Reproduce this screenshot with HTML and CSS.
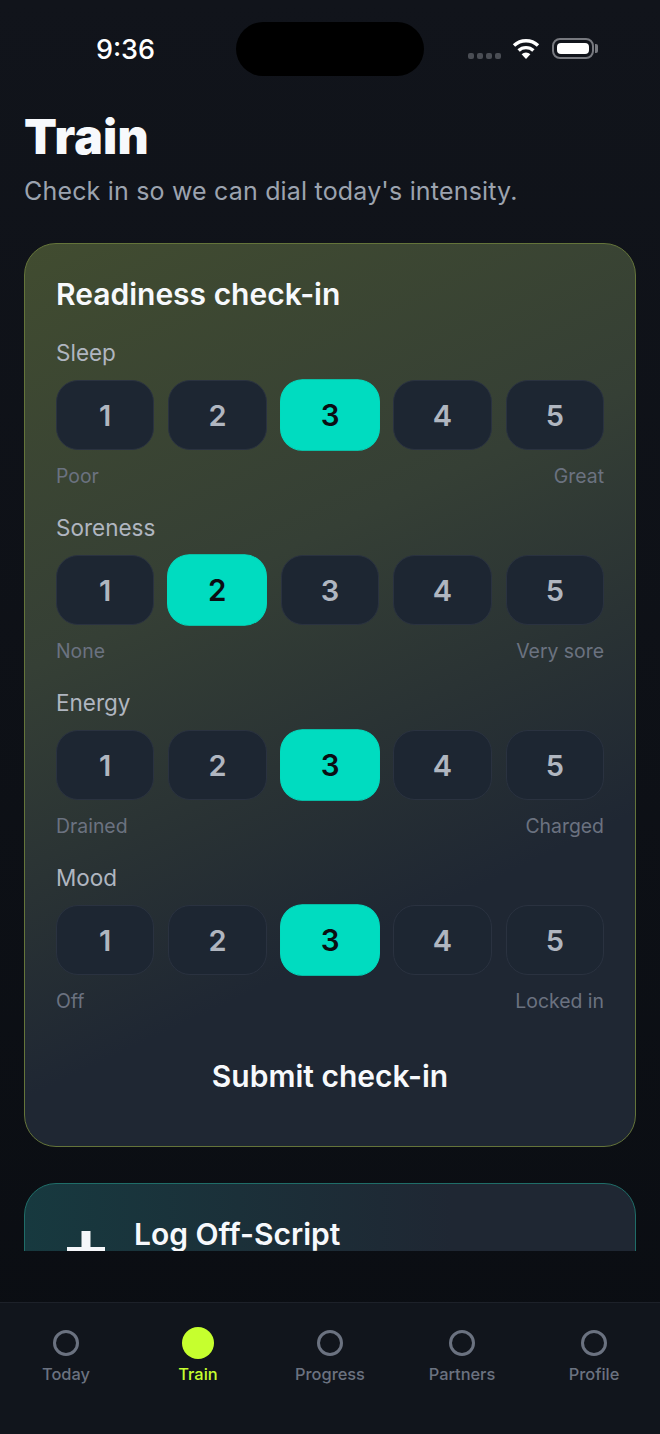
FILE: index.html
```html
<!DOCTYPE html>
<html lang="en">
<head>
    <meta charset="UTF-8">
    <meta name="viewport" content="width=device-width, initial-scale=1.0">
    <title>Train</title>
    <link rel="stylesheet" href="styles.css">
</head>
<body>
    <div class="app">
        <div class="status-bar">
            <span class="time">9:36</span>
            <div class="island"></div>
            <div class="status-icons">
                <div class="signal"><i></i><i></i><i></i><i></i></div>
                <svg class="wifi" width="28" height="22" viewBox="0 0 28 22">
                    <path d="M14 21 L9.6 16.2 A6.4 6.4 0 0 1 18.4 16.2 Z" fill="#fff"/>
                    <path d="M6.6 12.6 A10.8 10.8 0 0 1 21.4 12.6" fill="none" stroke="#fff" stroke-width="3.4"/>
                    <path d="M2 7.6 A17.4 17.4 0 0 1 26 7.6" fill="none" stroke="#fff" stroke-width="3.4"/>
                </svg>
                <div class="battery"><div class="battery-fill"></div></div>
            </div>
        </div>

        <main class="content">
            <h1>Train</h1>
            <p class="subtitle">Check in so we can dial today's intensity.</p>

            <section class="card checkin">
                <h2>Readiness check-in</h2>

                <div class="metric">
                    <div class="metric-label">Sleep</div>
                    <div class="scale">
                        <button>1</button><button>2</button><button class="selected">3</button><button>4</button><button>5</button>
                    </div>
                    <div class="scale-ends"><span>Poor</span><span>Great</span></div>
                </div>

                <div class="metric">
                    <div class="metric-label">Soreness</div>
                    <div class="scale">
                        <button>1</button><button class="selected">2</button><button>3</button><button>4</button><button>5</button>
                    </div>
                    <div class="scale-ends"><span>None</span><span>Very sore</span></div>
                </div>

                <div class="metric">
                    <div class="metric-label">Energy</div>
                    <div class="scale">
                        <button>1</button><button>2</button><button class="selected">3</button><button>4</button><button>5</button>
                    </div>
                    <div class="scale-ends"><span>Drained</span><span>Charged</span></div>
                </div>

                <div class="metric">
                    <div class="metric-label">Mood</div>
                    <div class="scale">
                        <button>1</button><button>2</button><button class="selected">3</button><button>4</button><button>5</button>
                    </div>
                    <div class="scale-ends"><span>Off</span><span>Locked in</span></div>
                </div>

                <button class="submit">Submit check-in</button>
            </section>

            <section class="card log">
                <svg class="plus" width="38" height="38" viewBox="0 0 38 38">
                    <rect x="14.5" y="0" width="9" height="38" fill="#f5f7fa"/>
                    <rect x="0" y="16" width="38" height="8" fill="#f5f7fa"/>
                </svg>
                <h2>Log Off-Script</h2>
            </section>
        </main>

        <nav class="tabs">
            <div class="tab"><span class="dot"></span>Today</div>
            <div class="tab active"><span class="dot"></span>Train</div>
            <div class="tab"><span class="dot"></span>Progress</div>
            <div class="tab"><span class="dot"></span>Partners</div>
            <div class="tab"><span class="dot"></span>Profile</div>
        </nav>
    </div>
</body>
</html>
```

FILE: styles.css
```css
* {
    box-sizing: border-box;
}
body {
    margin: 0;
    font-family: Inter, "Noto Sans", sans-serif;
    background: #0b0e13;
}
.app {
    width: 660px;
    height: 1434px;
    display: flex;
    flex-direction: column;
    overflow: hidden;
    background: linear-gradient(180deg, #11141b 0%, #0a0d12 100%);
}

/* status bar */
.status-bar {
    height: 76px;
    padding-top: 22px;
    display: flex;
    flex-shrink: 0;
}
.time {
    width: 236px;
    padding-top: 11px;
    text-align: center;
    padding-left: 15px;
    color: #fff;
    font-size: 27px;
    font-weight: 500;
    line-height: 34px;
}
.island {
    width: 188px;
    height: 54px;
    border-radius: 27px;
    background: #000;
}
.status-icons {
    display: flex;
    align-items: flex-start;
    padding-left: 44px;
    padding-top: 16px;
}
.signal {
    display: flex;
    gap: 3px;
    margin-top: 15px;
    margin-right: 11px;
}
.signal i {
    width: 6px;
    height: 6px;
    border-radius: 2px;
    background: #4a4d54;
}
.wifi {
    margin-right: 12px;
}
.battery {
    position: relative;
    width: 42px;
    height: 21px;
    padding: 3px;
    border: 2px solid #77797f;
    border-radius: 8px;
}
.battery::after {
    content: "";
    position: absolute;
    right: -6px;
    top: 4px;
    width: 3px;
    height: 9px;
    border-radius: 0 2px 2px 0;
    background: #77797f;
}
.battery-fill {
    height: 100%;
    border-radius: 4px;
    background: #fff;
}

/* scrolling content */
.content {
    height: 1175px;
    flex-shrink: 0;
    padding: 0 24px;
    overflow: hidden;
}
h1 {
    margin: 32px 0 0;
    color: #f7f9fc;
    font-size: 48px;
    font-weight: 900;
    letter-spacing: 0.2px;
    line-height: 58px;
}
.subtitle {
    margin: 8px 0 0;
    color: #9ca3af;
    font-size: 25px;
    letter-spacing: 0.18px;
    line-height: 34px;
}
.card {
    border-radius: 32px;
    border: 1px solid;
}
.checkin {
    height: 904px;
    margin-top: 35px;
    padding: 31px;
    border-color: #64743a;
    background: linear-gradient(155deg, #414c30 0%, #353f35 36%, #1f2733 72%, #1f2733 100%);
}
h2 {
    margin: 0;
    color: #f7f9fc;
    font-size: 30px;
    font-weight: 600;
    line-height: 38px;
}
.metric {
    height: 175px;
}
.checkin h2 {
    margin-bottom: 26px;
}
.metric-label {
    color: #b0b6c0;
    font-size: 22.5px;
    line-height: 28px;
}
.scale {
    display: flex;
    gap: 14px;
    margin-top: 13px;
}
.scale button {
    flex: 1;
    height: 70px;
    border: 1px solid #2a3240;
    border-radius: 22px;
    background: #1d2632;
    color: #b0b6c0;
    font-family: inherit;
    font-size: 29px;
    font-weight: 600;
}
.scale button.selected {
    transform: scale(1.02);
    border-color: #00dcc0;
    background: #00dcc0;
    color: #0b0e13;
}
.scale-ends {
    display: flex;
    justify-content: space-between;
    margin-top: 13px;
    color: #6b7280;
    font-size: 19.4px;
    line-height: 26px;
}
.submit {
    display: block;
    width: 100%;
    margin-top: 17px;
    padding: 0;
    border: none;
    background: none;
    color: #f7f9fc;
    font-family: inherit;
    font-size: 30px;
    font-weight: 600;
    line-height: 40px;
}
.log {
    display: flex;
    margin-top: 36px;
    height: 160px;
    padding: 31px 0 0 42px;
    gap: 29px;
    border-color: #1f6d68;
    background: linear-gradient(90deg, #17393f 0%, #1f2733 70%);
}
.plus {
    margin-top: 16px;
}

/* bottom tabs */
.tabs {
    display: flex;
    height: 132px;
    margin-top: 51px;
    flex-shrink: 0;
    border-top: 1px solid #1d2129;
    background: #11151c;
}
.tab {
    width: 132px;
    display: flex;
    flex-direction: column;
    align-items: center;
    padding-top: 24px;
    color: #6b7280;
    font-size: 16.4px;
    font-weight: 500;
    line-height: 22px;
}
.dot {
    width: 26px;
    height: 26px;
    margin: 3px 0 7px;
    border: 3px solid #6b7280;
    border-radius: 50%;
}
.tab.active {
    color: #c6ff2e;
}
.tab.active .dot {
    width: 32px;
    height: 32px;
    margin: 0 0 4px;
    border: none;
    background: #c6ff2e;
}
```
